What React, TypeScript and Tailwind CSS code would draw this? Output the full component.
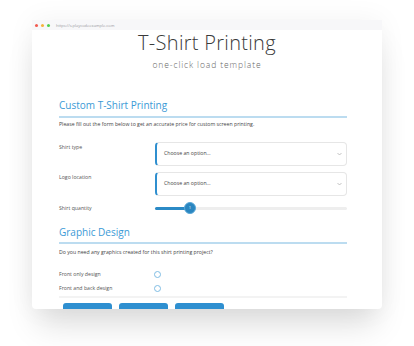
import React from "react";

const body = { fontFamily: '"Open Sans", "Liberation Sans", sans-serif' };

function SelectBox() {
  return (
    <div className="flex h-[24px] w-[192px] items-center justify-between rounded-[4px] border border-[#e6e6e6] border-l-2 border-l-[#2f8fcf] pl-[7px] pr-[4px]">
      <span className="text-[5.2px] text-[#444]">Choose an option...</span>
      <svg width="5" height="4" viewBox="0 0 10 6" fill="none" stroke="#aaa" strokeWidth="1.4">
        <path d="M1 1l4 4 4-4" />
      </svg>
    </div>
  );
}

function Label({ children }: { children: React.ReactNode }) {
  return <div className="w-[96px] shrink-0 text-[5.2px] leading-[8px] text-[#555]">{children}</div>;
}

export default function App() {
  return (
    <div className="h-[346px] w-[414px] overflow-hidden bg-white pl-[32px] pt-[20px]" style={body}>
      <div className="flex h-[289px] w-[350px] flex-col overflow-hidden rounded-b-[4px] bg-white shadow-[0_22px_30px_-6px_rgba(0,0,0,0.13),0_0_28px_rgba(0,0,0,0.05)]">
        {/* browser bar */}
        <div className="flex h-[10px] shrink-0 items-center gap-[3px] bg-[#f7f7f9] pl-[3px]">
          <span className="h-[3px] w-[3px] rounded-full bg-[#f25a4f]" />
          <span className="h-[3px] w-[3px] rounded-full bg-[#f5b33c]" />
          <span className="h-[3px] w-[3px] rounded-full bg-[#4fd04f]" />
          <span className="ml-[3px] text-[4px] leading-[5px] text-[#9a9aa2]">https://s.playcodeexample.com</span>
        </div>

        <div className="mt-[1px] text-center text-[20px] font-light leading-[24px] tracking-[0.3px] text-[#3a3a3a]">
          T-Shirt Printing
        </div>
        <div className="mt-[4px] text-center text-[8.5px] font-light leading-[12px] tracking-[0.9px] text-[#666]">
          one-click load template
        </div>

        <div className="ml-[27px] w-[288px]">
          <div className="mt-[26px] border-b-2 border-[#bcdcf0] pb-[3px] text-[10px] leading-[16px] text-[#3b9ad6]">
            Custom T-Shirt Printing
          </div>
          <p className="mt-[2px] text-[5.2px] leading-[8px] text-[#444]">
            Please fill out the form below to get an accurate price for custom screen printing.
          </p>

          <div className="mt-[14px] flex items-start">
            <div className="pt-[1px]">
              <Label>Shirt type</Label>
            </div>
            <SelectBox />
          </div>
          <div className="mt-[6px] flex items-start">
            <div className="pt-[1px]">
              <Label>Logo location</Label>
            </div>
            <SelectBox />
          </div>
          <div className="mt-[6px] flex h-[12px] items-center">
            <Label>Shirt quantity</Label>
            <div className="relative h-[3px] w-[192px] rounded-full bg-[#eeeeee]">
              <div className="h-[3px] w-[35px] rounded-full bg-[#2b8ac6]" />
              <div className="absolute left-[29px] top-[-4.5px] flex h-[12px] w-[12px] items-center justify-center rounded-full border border-[#5aa8d8] bg-[#2a86c0] text-[4px] text-white">
                1
              </div>
            </div>
          </div>

          <div className="mt-[10px] border-b-2 border-[#bcdcf0] pb-[2px] text-[10px] leading-[16px] text-[#3b9ad6]">
            Graphic Design
          </div>
          <p className="mt-[4px] text-[5.2px] leading-[8px] text-[#444]">
            Do you need any graphics created for this shirt printing project?
          </p>

          <div className="mt-[14px] flex h-[8px] items-center">
            <Label>Front only design</Label>
            <span className="ml-[-1px] h-[7px] w-[7px] rounded-full border border-[#7fbde4]" />
          </div>
          <div className="mt-[6px] flex h-[8px] items-center">
            <Label>Front and back design</Label>
            <span className="ml-[-1px] h-[7px] w-[7px] rounded-full border border-[#7fbde4]" />
          </div>
          <div className="mt-[4px] h-[2px] w-full bg-[#f3f3f3]" />

          <div className="ml-[4px] mt-[5px] flex gap-[7px]">
            <div className="h-[14px] w-[49px] rounded-[3px] bg-[#2e8fd0]" />
            <div className="h-[14px] w-[49px] rounded-[3px] bg-[#2e8fd0]" />
            <div className="h-[14px] w-[49px] rounded-[3px] bg-[#2e8fd0]" />
          </div>
        </div>
      </div>
    </div>
  );
}
